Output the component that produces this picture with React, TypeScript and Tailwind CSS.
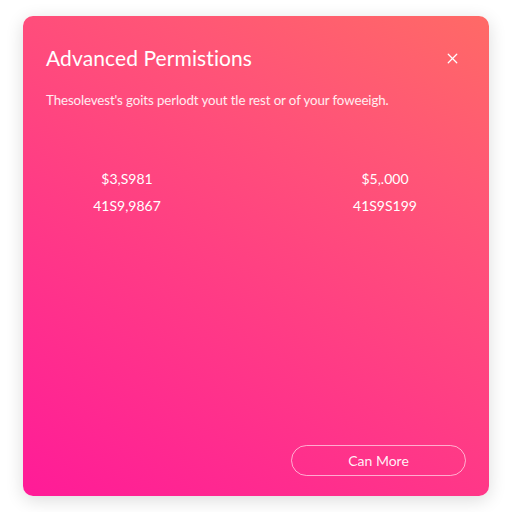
import { X } from 'lucide-react'

export default function App() {
  return (
    <main className="w-[512px] h-[512px] bg-white flex items-start justify-center pt-4 font-['Lato',sans-serif]">
      <div className="w-[466px] h-[480px] rounded-[10px] shadow-[0_4px_18px_rgba(0,0,0,0.14)] bg-[linear-gradient(30deg,#ff1b98_0%,#ff3a86_40%,#ff5676_75%,#ff6a66_100%)] flex flex-col px-[23px] pt-[29px] pb-[20px] text-white">
        <div className="flex items-center justify-between">
          <h1 className="text-[21px] leading-[26px] font-normal tracking-[0.1px]">Advanced Permistions</h1>
          <X className="w-[17px] h-[17px] mr-[5px]" strokeWidth={1.8} />
        </div>
        <p className="mt-[20px] text-[13.3px] leading-[18px] text-white/90 tracking-[-0.1px]">Thesolevest's goits perlodt yout tle rest or of your foweeigh.</p>
        <div className="mt-[61px] flex justify-between px-[46px] text-[14px] leading-[17px]">
          <div className="w-[70px] flex flex-col items-center gap-[10px]">
            <span>$3,S981</span>
            <span>41S9,9867</span>
          </div>
          <div className="w-[70px] flex flex-col items-center gap-[10px]">
            <span>$5,.000</span>
            <span>41S9S199</span>
          </div>
        </div>
        <div className="mt-auto flex justify-end">
          <button className="w-[175px] h-[31px] rounded-full border border-white/60 text-[14px] text-white/95">Can More</button>
        </div>
      </div>
    </main>
  )
}
